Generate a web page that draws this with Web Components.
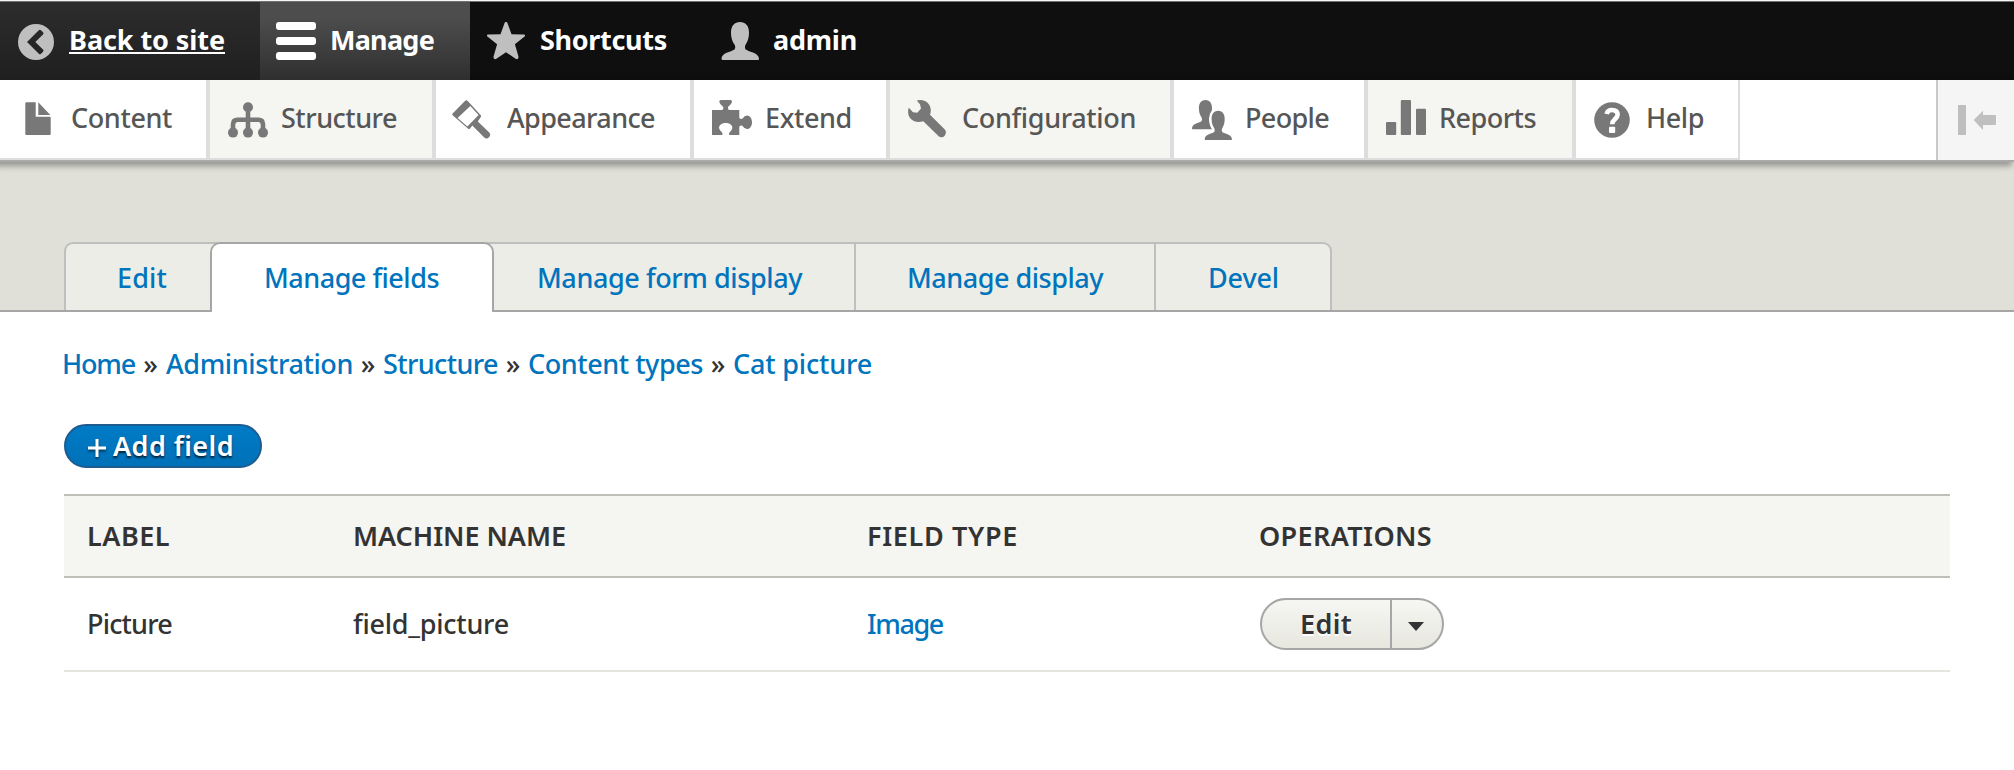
<!DOCTYPE html>
<html lang="en">
<head>
<meta charset="utf-8">
<title>Manage fields | Cat picture</title>
<style>
body{margin:0;background:#fff;color:#333;font:500 27px/36px "Noto Sans","Open Sans",sans-serif;overflow:hidden}
</style>
</head>
<body>
<admin-page></admin-page>
<script>
const define=(name,html,setup)=>customElements.define(name,class extends HTMLElement{
  connectedCallback(){
    if(this.shadowRoot)return;
    const t=document.createElement('template');
    t.innerHTML=html;
    this.attachShadow({mode:'open'}).append(t.content.cloneNode(true));
    if(setup)setup(this,this.shadowRoot);
  }
});

/* A run of text tracked to a given width. */
define('ui-label',`<style>:host{display:block;white-space:pre;flex:none}span{display:inline-block;text-decoration:var(--line,none);text-decoration-thickness:2px;text-underline-offset:2px;text-decoration-skip-ink:none}</style><span><slot></slot></span>`,(el,root)=>{
  const w=+el.getAttribute('w'),s=root.querySelector('span');
  const natural=s.getBoundingClientRect().width;
  s.style.letterSpacing=((w-natural)/el.textContent.length).toFixed(3)+'px';
  el.style.width=w+'px';
});

const user='M20 2c5.3 0 9 3.5 9 10.5 0 6-1.7 9.5-3.6 12.5-.6 1.5-.6 3.5.3 4.5C29 32 39 32.5 39 39q0 1-1 1H2.5q-1-.3-1-1C1.5 32.5 11 32 14.5 29.5c.9-1 .9-3 .3-4.5C12.7 22 11 18.5 11 12.5 11 5.5 14.7 2 20 2z';
const icons={
  back:'<path fill-rule="evenodd" d="M20 4a18 18 0 1 0 0 36 18 18 0 1 0 0-36zM22.8 10.3a1.5 1.5 0 0 1 2.2 0l2 2a1.5 1.5 0 0 1 0 2.2L19.3 22l7.7 7.5a1.5 1.5 0 0 1 0 2.2l-2 2a1.5 1.5 0 0 1-2.2 0L11 22z"/>',
  menu:'<rect y="2" width="40" height="8" rx="3"/><rect y="17" width="40" height="8" rx="3"/><rect y="32" width="40" height="8" rx="3"/>',
  star:'<path d="M20 2c.8 0 1.3.5 1.6 1.4l3.9 10.8 12 .2c1.8 0 2 1.4.8 2.4l-9.4 7.5 3.5 11.9c.5 2-.8 3.8-2.8 2.5L20 32.2l-9.6 6.5c-2 1.3-3.3-.5-2.8-2.5l3.5-11.9-9.4-7.5c-1.2-1-1-2.4.8-2.4l12-.2 3.9-10.8C18.7 2.5 19.2 2 20 2z"/>',
  user:`<path d="${user}"/>`,
  file:'<path d="M10.3 2.3H19.7V16.7H33.7q1 0 1 1V34q0 1-1 1H10.3q-1 0-1-1V3.3q0-1 1-1zM22.3 2.3L34.3 15H22.3z"/>',
  tree:'<path d="M20 8V32M5 32V24.5Q5 19.7 9.5 19.7H30.5Q35 19.7 35 24.5V32" fill="none" stroke="currentColor" stroke-width="4.6"/><circle cx="20" cy="7.2" r="5"/><circle cx="5" cy="32.6" r="5"/><circle cx="20" cy="32.6" r="5"/><circle cx="35" cy="32.6" r="5"/>',
  brush:'<path fill-rule="evenodd" d="M13.2.8q1.2-1.2 2.3 0L28.8 15.2q.6.8 0 1.7L25.8 21.5 37 32.3a3.5 3.5 0 0 1-5 5L20.3 25.6 17.8 28.7q-.8.6-1.6 0L.6 15.2Q0 14.4.6 13.6zM18.3 6L5.6 18 15.4 26.6 26.6 15z"/>',
  puzzle:'<path d="M0 10H10.5q1.2-1.5.8-3Q7.3 3.5 7.3 1.5 7.3 0 9 0H18.5Q20 0 20 1.5 20 3.5 16 7q-.4 1.5.8 3H27.3V18q2 1.8 3.5.3Q32.5 15.5 35 15.5c3 0 5 3 5 6.8s-2 6.8-5 6.8q-2.5 0-4.2-2.8-1.5-1.5-3.5.3V35H17.3q-.6-1 .2-2.6C19 31 20.3 29.5 20.3 27.5c0-2.5-3-4.5-6.6-4.5s-6.6 2-6.6 4.5c0 2 1.5 3.5 3 4.9q.8 1.6.2 2.6H0z"/>',
  wrench:'<path d="M8.7.6C15-1.5 22.8 2 22.8 10.5c0 1.5-.3 3-.8 4.3L36.8 29.6c1.6 1.6 1.4 4.2-.1 6.1-1.8 1.9-4.4 2.2-6 .6L15.3 21.2C7 24-.2 19 .1 11.5c0-1.5.2-2.8.7-3.8L5 12.3l4.3.4L13 8.5l-1-4.3z"/>',
  people:`<svg width="21" height="40"><path transform="translate(-1.1 -1.54) scale(.728 .77)" d="${user}"/></svg><path transform="translate(11.6 9.2) scale(.728 .77)" d="${user}" stroke="#fff" stroke-width="7"/><path transform="translate(11.6 9.2) scale(.728 .77)" d="${user}"/>`,
  chart:'<rect y="22" width="10.2" height="13" rx="1"/><rect x="14.8" width="10.2" height="35" rx="1"/><rect x="30" y="8.7" width="10" height="26.3" rx="1"/>',
  help:'<circle cx="20" cy="20" r="17.8"/><path d="M14.6 14Q15.5 10 20 10c4 0 5.6 2.2 5.6 4.8 0 4-5.4 4.6-5.4 9.4" fill="none" stroke="#fff" stroke-width="4.6"/><rect x="17" y="26.7" width="6.2" height="6.3" rx="1" fill="#fff"/>',
  collapse:'<path d="M0 5H7q1 0 1 1V34q0 1-1 1H0zM15.7 20L25 10.7V15H37q1 0 1 1v8q0 1-1 1H25v5z"/>'
};
define('ui-icon','<style>:host{display:block;width:40px;height:40px;flex:none}svg{display:block;overflow:visible}</style>',(el,root)=>{
  const t=document.createElement('template');
  t.innerHTML=`<svg width="40" height="40" fill="currentColor" aria-hidden="true">${icons[el.getAttribute('name')]}</svg>`;
  root.append(t.content);
});

define('toolbar-tab',`<style>
:host{display:flex;box-sizing:border-box;height:78px;flex:none;font-weight:700;color:#fff}
::slotted(ui-icon){margin-top:18px;color:#bfbfbf}
::slotted(ui-label){margin-top:20px}
:host([kind=back]){--line:underline;background:linear-gradient(#2d2d2d,#1f1f1f)}
:host([kind=active]){background:linear-gradient(#4d4d4d 20%,#2f2f2f)}
:host([kind=active]) ::slotted(ui-icon){color:#fff}
</style><slot></slot>`);

define('tray-item',`<style>
:host{display:flex;box-sizing:border-box;height:80px;flex:none;border-right:4px solid #ddd;border-bottom:2px solid #ddd;color:#565656;background:#fff}
:host([shade]){background:#f5f5f2}
:host([last]){border-right-width:2px}
::slotted(ui-icon){margin-top:20px;color:#787878}
::slotted(ui-label){margin-top:20px}
</style><slot></slot>`);

define('admin-toolbar',`<style>
:host{display:block;position:relative;z-index:1}
.bar{display:flex;height:78px;background:#0f0f0f;border-top:1px solid #6f7370}
.top{border-top:1px solid #f4f6f5}
.tray{display:flex;height:80px;background:#fff;border-bottom:2px solid #aaa;box-shadow:-4px 2px 6px 2px rgba(0,0,0,.3333)}
.fold{box-sizing:border-box;margin-left:auto;width:78px;border-left:2px solid #c9c9c9;background:#f5f5f5;color:#bfbfbf;padding:20px 0 0 20px}
</style>
<div class="top"><div class="bar">
<toolbar-tab kind="back" style="width:260px;padding-left:16px"><ui-icon name="back"></ui-icon><ui-label w="156" style="margin-left:13px">Back to site</ui-label></toolbar-tab>
<toolbar-tab kind="active" style="width:210px;padding-left:16px"><ui-icon name="menu"></ui-icon><ui-label w="104" style="margin-left:14px">Manage</ui-label></toolbar-tab>
<toolbar-tab style="width:234px;padding-left:16px"><ui-icon name="star"></ui-icon><ui-label w="127" style="margin-left:14px">Shortcuts</ui-label></toolbar-tab>
<toolbar-tab style="padding-left:16px"><ui-icon name="user"></ui-icon><ui-label w="84" style="margin-left:13px">admin</ui-label></toolbar-tab>
</div></div>
<div class="tray">
<tray-item style="width:210px;padding-left:16px"><ui-icon name="file"></ui-icon><ui-label w="101" style="margin-left:15px">Content</ui-label></tray-item>
<tray-item shade style="width:226px;padding-left:18px"><ui-icon name="tree"></ui-icon><ui-label w="116" style="margin-left:13px">Structure</ui-label></tray-item>
<tray-item style="width:258px;padding-left:16px"><ui-icon name="brush"></ui-icon><ui-label w="148" style="margin-left:15px">Appearance</ui-label></tray-item>
<tray-item style="width:196px;padding-left:18px"><ui-icon name="puzzle"></ui-icon><ui-label w="87" style="margin-left:13px">Extend</ui-label></tray-item>
<tray-item shade style="width:284px;padding-left:18px"><ui-icon name="wrench"></ui-icon><ui-label w="174" style="margin-left:14px">Configuration</ui-label></tray-item>
<tray-item style="width:194px;padding-left:18px"><ui-icon name="people"></ui-icon><ui-label w="84" style="margin-left:13px">People</ui-label></tray-item>
<tray-item shade style="width:208px;padding-left:18px"><ui-icon name="chart"></ui-icon><ui-label w="97" style="margin-left:13px">Reports</ui-label></tray-item>
<tray-item last style="width:164px;padding-left:16px"><ui-icon name="help"></ui-icon><ui-label w="58" style="margin-left:14px">Help</ui-label></tray-item>
<div class="fold"><ui-icon name="collapse"></ui-icon></div>
</div>`);

define('nav-tab',`<style>
:host{display:block;box-sizing:border-box;height:68px;padding:16px 0 0 52px;border:2px solid #bfbfbf;border-left-width:0;border-bottom:0;background:#ecede6;color:#0074bd}
:host([first]){border-left-width:2px;border-right:0;border-top-left-radius:9px}
:host([last]){border-top-right-radius:9px}
:host([active]){position:relative;height:70px;background:#fff;border:2px solid #a6a6a6;border-bottom:0;border-radius:10px 10px 0 0}
</style><slot></slot>`);

define('tab-strip',`<style>
:host{display:flex;box-sizing:border-box;height:150px;padding:80px 0 0 64px;background:#e0e0d8;border-bottom:2px solid #a6a6a6}
</style>
<nav-tab first style="width:154px;margin-right:-8px;padding-left:51px"><ui-label w="50">Edit</ui-label></nav-tab>
<nav-tab active style="width:284px"><ui-label w="175">Manage fields</ui-label></nav-tab>
<nav-tab style="width:370px;margin-left:-8px;padding-left:51px"><ui-label w="265">Manage form display</ui-label></nav-tab>
<nav-tab style="width:300px;padding-left:51px"><ui-label w="196">Manage display</ui-label></nav-tab>
<nav-tab last style="width:176px"><ui-label w="71">Devel</ui-label></nav-tab>`);

define('bread-crumb',`<style>
:host{display:flex;height:36px;color:#0074bd}
i{font-style:normal;color:#333;width:31px;text-align:center}
</style>
<ui-label w="73">Home</ui-label><i>»</i><ui-label w="187">Administration</ui-label><i style="width:30px">»</i><ui-label w="115">Structure</ui-label><i style="width:30px">»</i><ui-label w="175">Content types</ui-label><i style="width:30px">»</i><ui-label w="139">Cat picture</ui-label>`);

define('action-button',`<style>
:host{display:flex;box-sizing:border-box;width:198px;height:44px;padding:2px 0 0 22px;border:2px solid #1e5c90;border-radius:22px;background:linear-gradient(#007bc6,#0071b8);color:#fff;font-weight:600;text-shadow:0 2px 2px rgba(0,0,0,.7)}
svg{margin:11px 7px 0 0;overflow:visible;filter:drop-shadow(0 2px 1px rgba(0,0,0,.5))}
</style><svg width="18" height="18" stroke="#fff" stroke-width="3"><path d="M9 0V18M0 9H18"/></svg><slot></slot>`);

define('drop-button',`<style>
:host{display:flex;box-sizing:border-box;width:184px;height:52px;border:2px solid #a6a6a6;border-radius:26px;background:linear-gradient(#f6f6f3,#e7e7df);font-weight:600;text-shadow:0 2px 0 #fff}
.main{box-sizing:border-box;width:130px;padding:6px 0 0 38px;border-right:2px solid #a6a6a6}
svg{margin:22px 0 0 15px}
</style><div class="main"><slot></slot></div><svg width="18" height="10" fill="#333"><path d="M1 0H17L9 9z"/></svg>`);

define('field-table',`<style>
:host{display:block}
.row{display:grid;grid-template-columns:266px 514px 392px 1fr;align-items:center;padding-left:23px;height:92px;border-bottom:2px solid #e6e4df}
.head{height:80px;background:#f5f5f2;border-top:2px solid #bfbfba;border-bottom-color:#bfbfba;font-weight:600}
drop-button{margin-left:1px}
a{color:#0074bd}
</style>
<div class="row head"><ui-label w="83">LABEL</ui-label><ui-label w="213">MACHINE NAME</ui-label><ui-label w="151">FIELD TYPE</ui-label><ui-label w="173">OPERATIONS</ui-label></div>
<div class="row"><ui-label w="85">Picture</ui-label><ui-label w="156">field_picture</ui-label><a><ui-label w="76">Image</ui-label></a><drop-button><ui-label w="52">Edit</ui-label></drop-button></div>`);

define('admin-page',`<style>
:host{display:block;height:770px}
main{padding:34px 64px 0}
bread-crumb{margin-left:-2px}
action-button{margin:42px 0 26px}
</style>
<admin-toolbar></admin-toolbar>
<tab-strip></tab-strip>
<main><bread-crumb></bread-crumb><action-button><ui-label w="121">Add field</ui-label></action-button><field-table></field-table></main>`);
</script>
</body>
</html>
